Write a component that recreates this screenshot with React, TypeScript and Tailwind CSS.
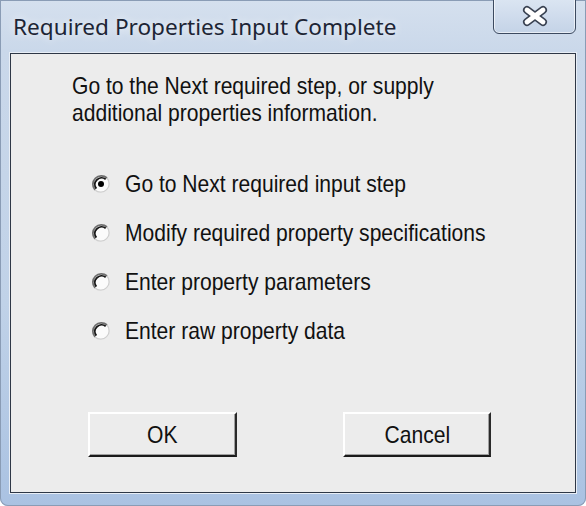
import React from "react";

function Radio({ checked }: { checked?: boolean }) {
  return (
    <svg width="20" height="20" viewBox="0 0 20 20" className="shrink-0">
      <circle cx="10" cy="10" r="8.5" fill="#fbfbfb" />
      <path d="M4 16 A8.5 8.5 0 0 1 16 4" fill="none" stroke="#6e6e6e" strokeWidth="1.8" />
      <path d="M5.3 14.7 A6.7 6.7 0 0 1 14.7 5.3" fill="none" stroke="#151515" strokeWidth="1.9" />
      <path d="M16 4 A8.5 8.5 0 0 1 4 16" fill="none" stroke="#cfcfcf" strokeWidth="1.3" />
      {checked && <circle cx="10" cy="10" r="3" fill="#000" />}
    </svg>
  );
}

function Btn({ label, w }: { label: string; w: string }) {
  return (
    <div
      className={`${w} h-[45px] flex items-center justify-center bg-[#ececec] border-t-2 border-l-2 border-t-white border-l-white border-b-2 border-r-2 border-b-[#1a1a1a] border-r-[#2a2a2a] shadow-[inset_-1px_-1px_0_#a0a0a0]`}
    >
      <span className="inline-block scale-x-[0.8775] text-[24px] leading-none text-[#111]">{label}</span>
    </div>
  );
}

export default function App() {
  const options = [
    "Go to Next required input step",
    "Modify required property specifications",
    "Enter property parameters",
    "Enter raw property data",
  ];
  return (
    <div className="w-[586px] h-[506px] overflow-hidden bg-white">
      <div className="w-[586px] h-[506px] flex flex-col rounded-b-[8px] bg-[linear-gradient(180deg,#d5e0ee_0%,#cad8ea_10%,#c0d2e8_60%,#aac2e2_100%)] shadow-[inset_0_0_0_1px_#8a9cb5]">
        <div className="h-[53px] flex items-start justify-between">
          <div
            className="pl-[13px] pt-[13px] text-[22.6px] leading-[28px] text-[#1d2535] [text-shadow:0_0_8px_rgba(255,255,255,0.9)]"
            style={{ fontFamily: '"Noto Sans", "Open Sans", sans-serif' }}
          >
            Required Properties Input Complete
          </div>
          <div className="mr-[10px] mt-[-2px] w-[83px] h-[36px] rounded-b-[6px] border border-[#3c4a60] bg-[linear-gradient(180deg,#dbe5f2,#c4d3e7)] shadow-[inset_0_0_0_1px_rgba(255,255,255,0.6)] flex items-center justify-center">
            <svg width="30" height="22" viewBox="0 0 30 22">
              <g strokeLinecap="round">
                <line x1="7" y1="5" x2="23" y2="17" stroke="#3a4252" strokeWidth="8" />
                <line x1="23" y1="5" x2="7" y2="17" stroke="#3a4252" strokeWidth="8" />
                <line x1="7" y1="5" x2="23" y2="17" stroke="#ffffff" strokeWidth="4.8" />
                <line x1="23" y1="5" x2="7" y2="17" stroke="#ffffff" strokeWidth="4.8" />
              </g>
            </svg>
          </div>
        </div>
        <div className="mx-[10px] w-[566px] h-[440px] border border-[#2e3746] bg-[#ececec] shadow-[0_0_0_1px_#e8eef6] flex flex-col"
          style={{ fontFamily: '"Liberation Sans", Arial, sans-serif' }}
        >
          <div className="ml-[61px] mt-[18px] text-[24px] leading-[27px] text-[#111]">
            <div className="origin-left scale-x-[0.8775] whitespace-nowrap">Go to the Next required step, or supply</div>
            <div className="origin-left scale-x-[0.8775] whitespace-nowrap">additional properties information.</div>
          </div>
          <div className="mt-[33px] flex flex-col">
            {options.map((o, i) => (
              <div key={o} className="h-[49px] flex items-center pl-[80px]">
                <Radio checked={i === 0} />
                <span className="ml-[14px] inline-block origin-left scale-x-[0.8775] whitespace-nowrap text-[24px] leading-none text-[#111]">{o}</span>
              </div>
            ))}
          </div>
          <div className="mt-[57px] flex pl-[77px] gap-[106px]">
            <Btn label="OK" w="w-[149px]" />
            <Btn label="Cancel" w="w-[148px]" />
          </div>
        </div>
      </div>
    </div>
  );
}
